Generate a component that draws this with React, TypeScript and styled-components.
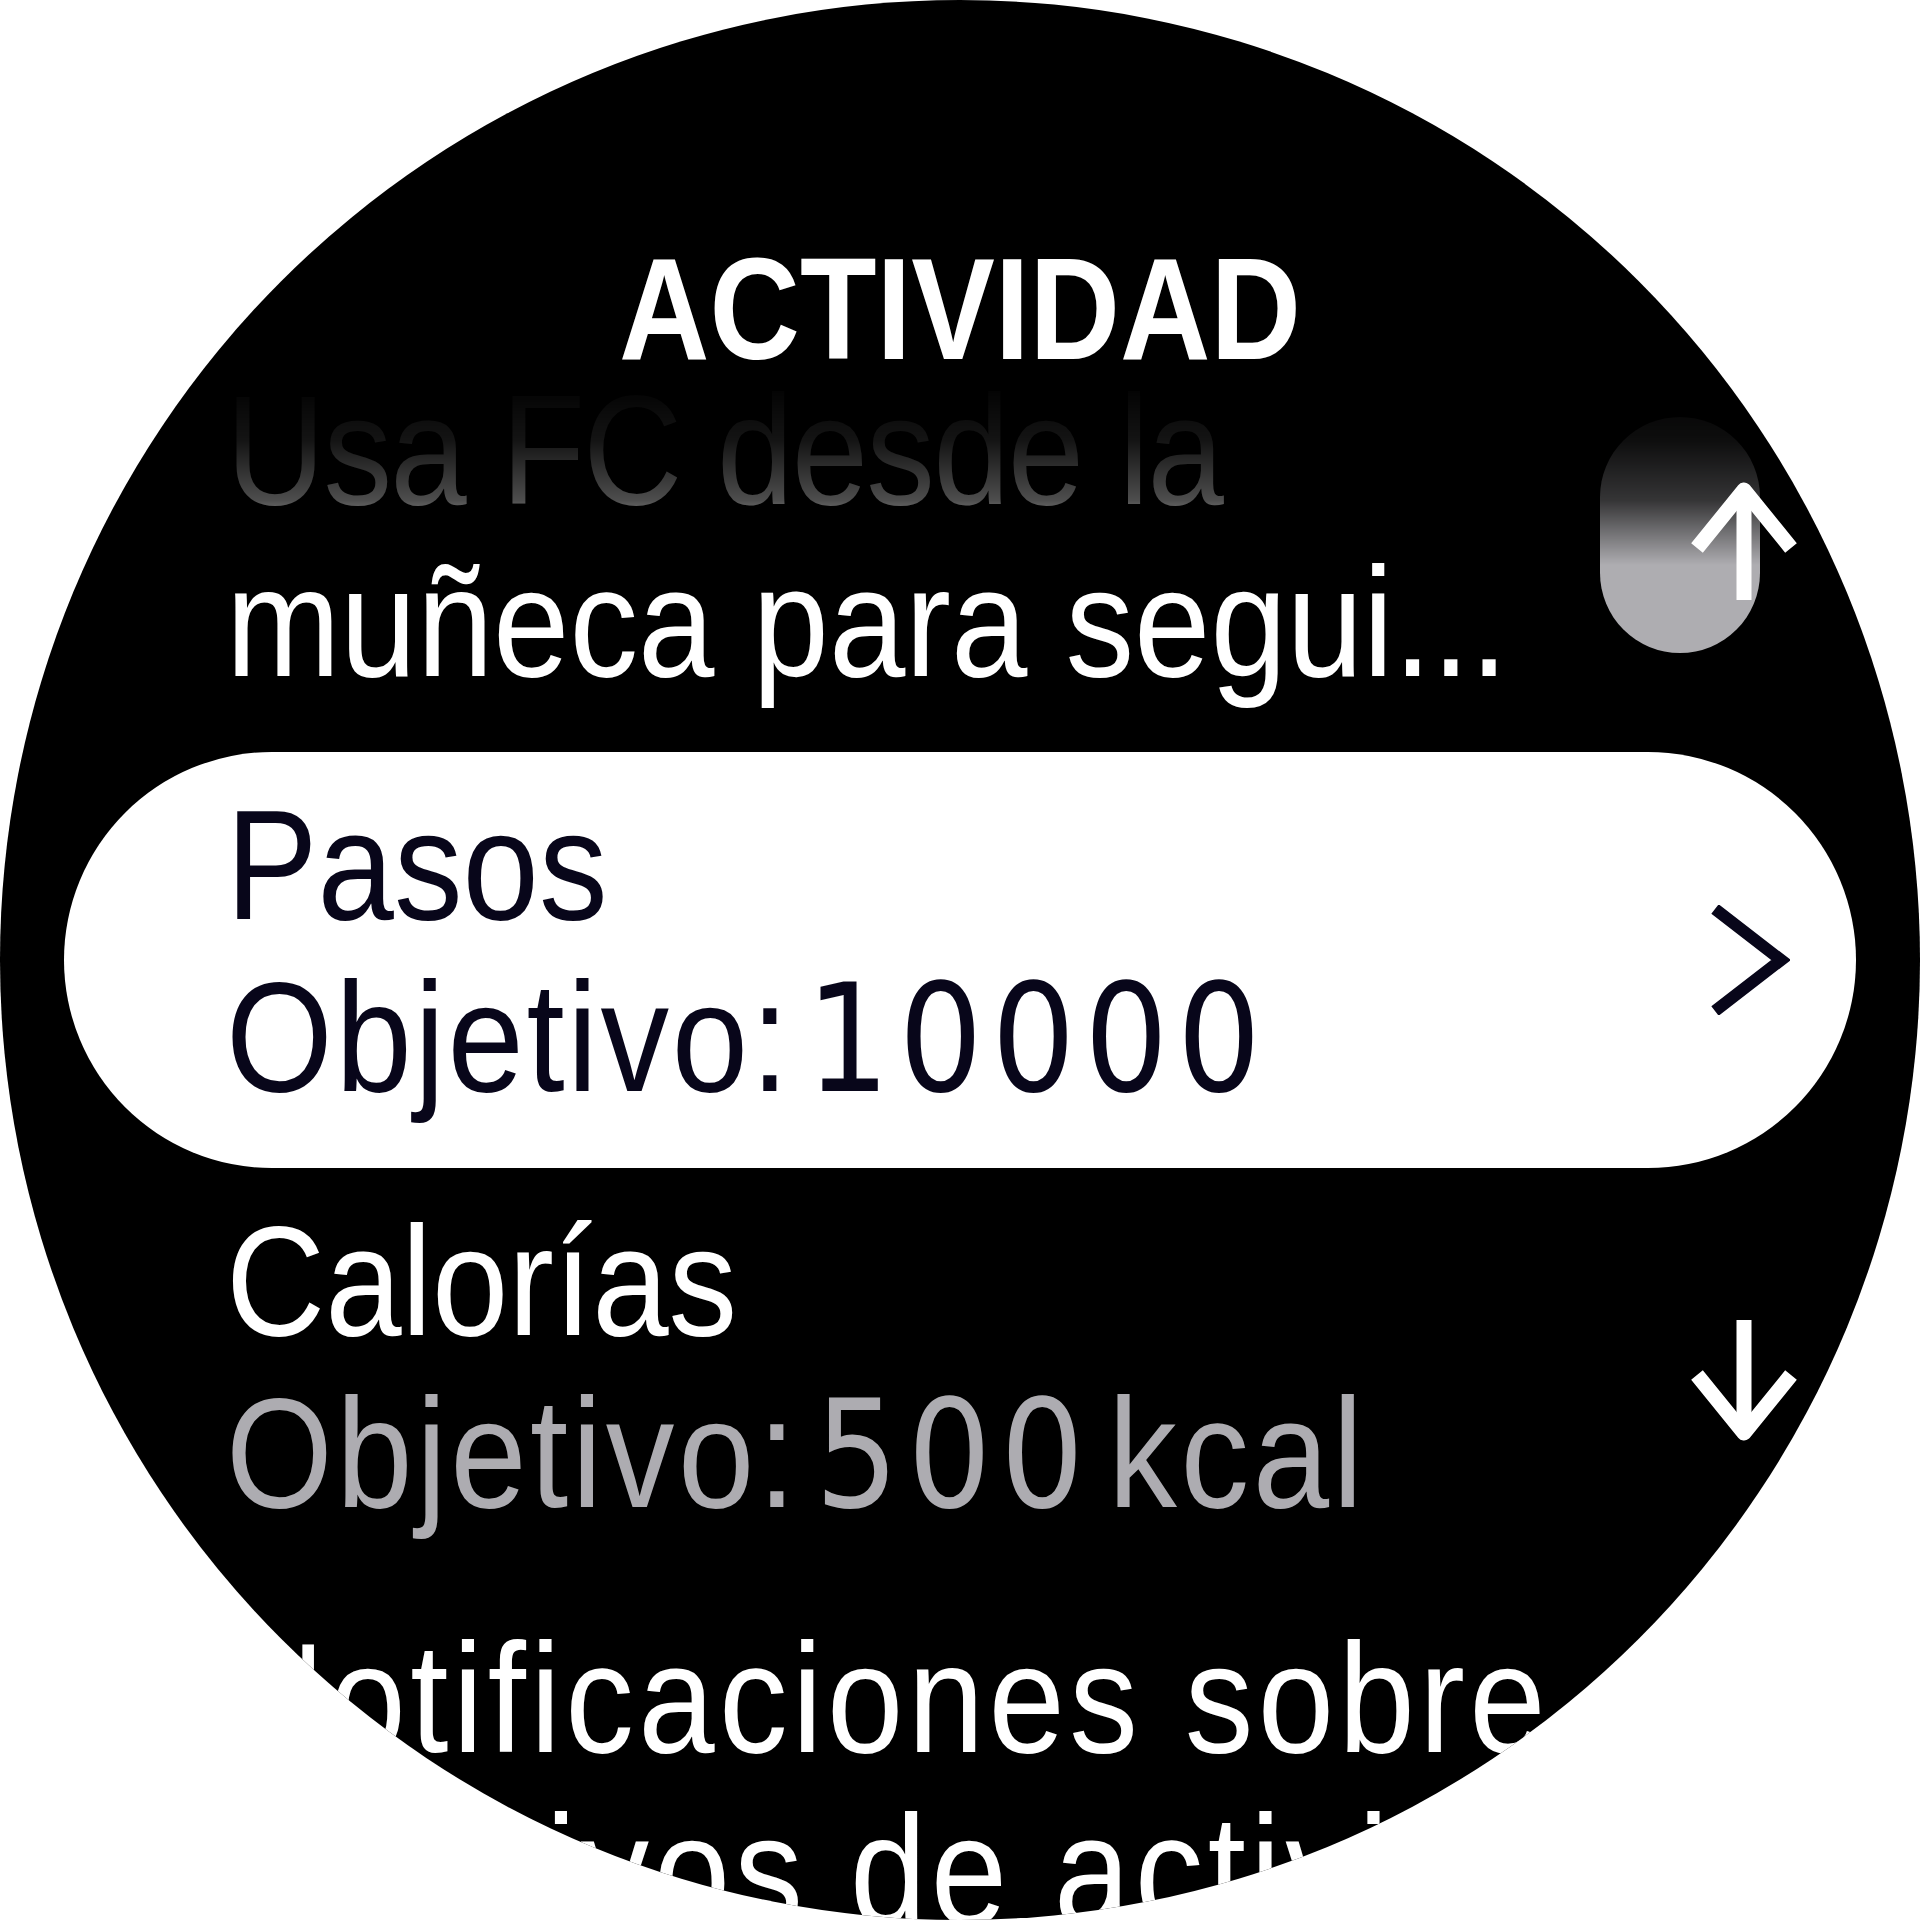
import React from 'react';
import styled, { createGlobalStyle } from 'styled-components';

const GlobalStyle = createGlobalStyle`
  html, body {
    margin: 0;
    padding: 0;
    background: #ffffff;
  }
  body {
    font-family: "Liberation Sans", Arial, sans-serif;
  }
`;

const Page = styled.div`
  width: 1920px;
  height: 1920px;
  background: #ffffff;
`;

const Dial = styled.div`
  position: relative;
  width: 1920px;
  height: 1920px;
  border-radius: 50%;
  overflow: hidden;
  background: #000000;
  display: flex;
  flex-direction: column;
`;

// the watch font is condensed, so the glyphs get squeezed a bit
const Title = styled.h1`
  position: absolute;
  top: 238px;
  left: 0;
  right: 0;
  margin: 0;
  text-align: center;
  font-size: 144px;
  line-height: 144px;
  font-weight: 700;
  color: #ffffff;
  transform: scaleX(0.87);
  z-index: 2;
`;

const fade =
  'linear-gradient(to bottom, transparent 44px, rgba(0,0,0,0.08) 104px, rgba(0,0,0,0.3) 164px, #000 229px)';

const List = styled.ul`
  list-style: none;
  margin: 336px 64px 0;
  padding: 0;
  -webkit-mask-image: ${fade};
  mask-image: ${fade};
`;

const Item = styled.li<{ $selected?: boolean }>`
  display: flex;
  align-items: center;
  flex-shrink: 0;
  height: 416px;
  box-sizing: border-box;
  padding: 0 66px 0 162px;
  border-radius: 208px;
  background: ${p => (p.$selected ? '#ffffff' : 'transparent')};
`;

const TextBlock = styled.div`
  flex: 1;
  min-width: 0;
  padding-bottom: 16px;
`;

type Tone = 'light' | 'dim' | 'dark';

const toneColor: Record<Tone, string> = {
  light: '#ffffff',
  dim: '#adacb1',
  dark: '#08061a',
};

const Line = styled.div<{ $tone: Tone; $spacing?: number; $tight?: boolean }>`
  font-size: 156px;
  line-height: 172px;
  white-space: nowrap;
  color: ${p => toneColor[p.$tone]};
  letter-spacing: ${p => p.$spacing ?? 0}px;
  word-spacing: ${p => (p.$tight ? '-30px' : '0')};
  transform: scaleX(0.88);
  transform-origin: left center;
`;

// digits on the watch are wide and the "1" has a foot
const Num = styled.span`
  font-family: "DejaVu Sans", "Liberation Sans", sans-serif;
  font-size: 150px;
  letter-spacing: 10px;
`;

const Toggle = styled.div`
  width: 160px;
  height: 236px;
  border-radius: 80px;
  background: #aeadb1;
  margin: 0 30px 18px 0;
  flex-shrink: 0;
`;

const Chevron = styled.svg`
  width: 80px;
  height: 110px;
  flex-shrink: 0;
`;

const ScrollHint = styled.svg<{ $top: number }>`
  position: absolute;
  left: 1684px;
  top: ${p => p.$top}px;
  width: 120px;
  height: 134px;
  z-index: 3;
`;

type LineSpec = {
  text: React.ReactNode;
  tone: Tone;
  spacing?: number;
  tight?: boolean;
};

type Entry = {
  lines: LineSpec[];
  selected?: boolean;
  trailing?: 'toggle' | 'chevron';
};

const entries: Entry[] = [
  {
    lines: [
      { text: 'Usa FC desde la', tone: 'light', spacing: -2 },
      { text: 'muñeca para segui...', tone: 'light' },
    ],
    trailing: 'toggle',
  },
  {
    lines: [
      { text: 'Pasos', tone: 'dark' },
      {
        text: (
          <>
            Objetivo: <Num>10000</Num>
          </>
        ),
        tone: 'dark',
        spacing: 3,
        tight: true,
      },
    ],
    selected: true,
    trailing: 'chevron',
  },
  {
    lines: [
      { text: 'Calorías', tone: 'light' },
      {
        text: (
          <>
            Objetivo: <Num>500</Num> kcal
          </>
        ),
        tone: 'dim',
        spacing: 4,
        tight: true,
      },
    ],
  },
  {
    lines: [
      { text: 'Notificaciones sobre', tone: 'light', spacing: 5 },
      { text: 'objetivos de actividad', tone: 'light', spacing: 5 },
    ],
  },
];

export default function App() {
  return (
    <Page>
      <GlobalStyle />
      <Dial>
        <Title>ACTIVIDAD</Title>
        <List>
          {entries.map((entry, i) => (
            <Item key={i} $selected={entry.selected}>
              <TextBlock>
                {entry.lines.map((line, j) => (
                  <Line key={j} $tone={line.tone} $spacing={line.spacing} $tight={line.tight}>
                    {line.text}
                  </Line>
                ))}
              </TextBlock>
              {entry.trailing === 'toggle' && <Toggle />}
              {entry.trailing === 'chevron' && (
                <Chevron viewBox="0 0 80 110">
                  <polyline
                    points="5,4 71,55 5,106"
                    fill="none"
                    stroke="#08061a"
                    strokeWidth="12"
                    strokeLinejoin="miter"
                  />
                </Chevron>
              )}
            </Item>
          ))}
        </List>

        {/* scroll hints */}
        <ScrollHint $top={474} viewBox="0 0 120 134">
          <g fill="none" stroke="#ffffff" strokeWidth="15">
            <line x1="60" y1="18" x2="60" y2="126" />
            <polyline points="13,74 60,16 107,74" strokeLinejoin="round" />
          </g>
        </ScrollHint>
        <ScrollHint $top={1316} viewBox="0 0 120 134">
          <g fill="none" stroke="#ffffff" strokeWidth="15">
            <line x1="60" y1="4" x2="60" y2="114" />
            <polyline points="13,59 60,117 107,59" strokeLinejoin="round" />
          </g>
        </ScrollHint>
      </Dial>
    </Page>
  );
}
